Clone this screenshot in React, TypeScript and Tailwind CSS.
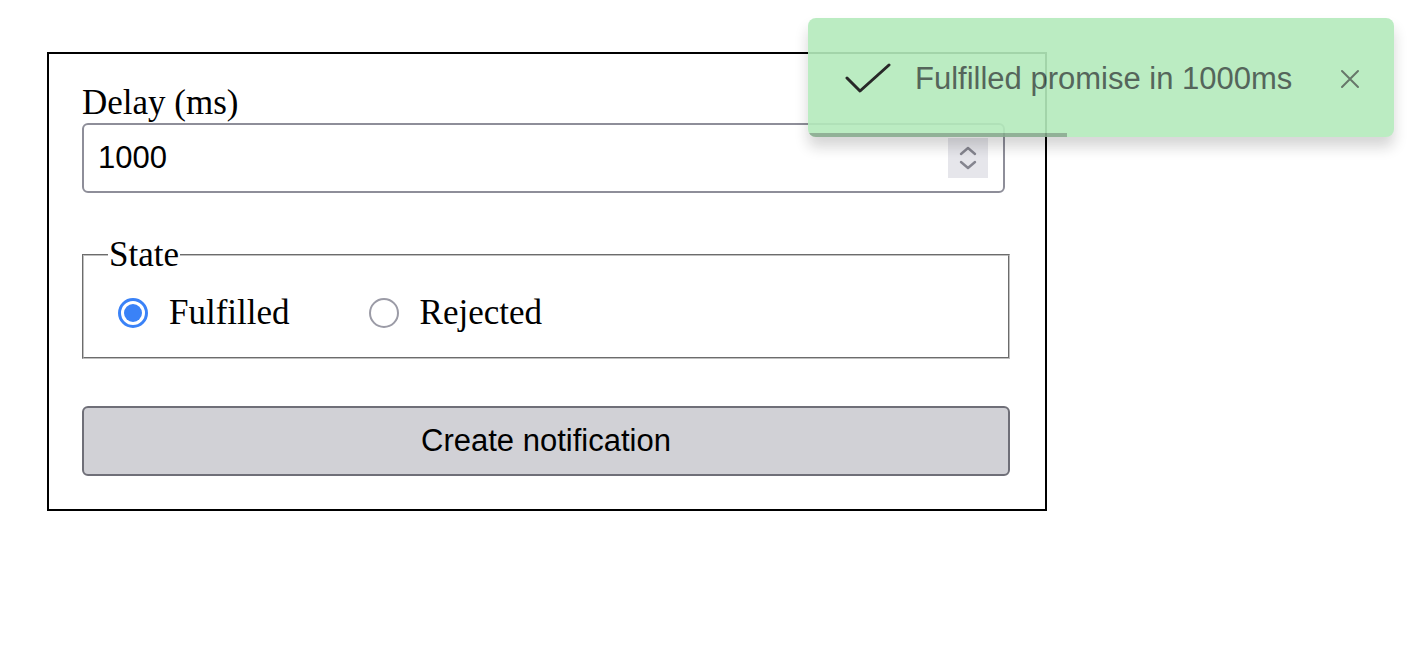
import React from "react";

export default function App() {
  const serif = { fontFamily: '"Liberation Serif", "Times New Roman", serif' };
  return (
    <div className="relative w-[1408px] h-[656px] bg-white overflow-hidden" style={{ fontFamily: '"Liberation Sans", Arial, sans-serif' }}>
      <div className="ml-[47px] mt-[52px] w-[1000px] border-2 border-black px-[33px] pt-[29px] pb-[33px]">
        <div className="h-[40px] text-[35px] leading-[40px] text-black" style={serif}>Delay (ms)</div>
        <div className="w-[923px] h-[70px] border-2 border-[#8e8e99] rounded-[6px] flex items-center pl-[14px] pr-[15px]">
          <span className="flex-1 text-[31px] text-black">1000</span>
          <div className="w-[40px] h-[40px] bg-[#e6e6eb] flex flex-col items-center justify-center gap-[4px]">
            <svg width="18" height="10" viewBox="0 0 18 10" fill="none">
              <path d="M2 8 L9 2 L16 8" stroke="#85858f" strokeWidth="2.4" strokeLinecap="round" strokeLinejoin="round" />
            </svg>
            <svg width="18" height="10" viewBox="0 0 18 10" fill="none">
              <path d="M2 2 L9 8 L16 2" stroke="#85858f" strokeWidth="2.4" strokeLinecap="round" strokeLinejoin="round" />
            </svg>
          </div>
        </div>
        <fieldset className="mt-[42px] w-[928px] border-2 [border-style:groove] border-[#c0c0c0] pl-[24px] pr-[20px] pb-[23px] pt-[17px]">
          <legend className="text-[35px] leading-[40px] px-[1px] text-black" style={serif}>State</legend>
          <div className="flex items-center h-[42px]" style={serif}>
            <span className="w-[30px] h-[30px] rounded-full border-[3px] border-[#3a82f7] flex items-center justify-center ml-[10px]">
              <span className="w-[18px] h-[18px] rounded-full bg-[#3a82f7]" />
            </span>
            <span className="ml-[21px] text-[35px] text-black">Fulfilled</span>
            <span className="ml-[79px] w-[30px] h-[30px] rounded-full border-2 border-[#9b9ba6]" />
            <span className="ml-[21px] text-[35px] text-black">Rejected</span>
          </div>
        </fieldset>
        <button className="mt-[47px] w-[928px] h-[70px] bg-[#d1d1d6] border-2 border-[#6f6f78] rounded-[6px] text-[31px] text-black flex items-center justify-center">
          Create notification
        </button>
      </div>

      <div className="absolute left-[808px] top-[18px] w-[586px] h-[119px] rounded-[8px] bg-[#b4ebbc] opacity-90 shadow-[0_10px_14px_rgba(0,0,0,0.18)] overflow-hidden flex items-center">
        <svg className="ml-[37px] mt-[2px]" width="46" height="32" viewBox="0 0 46 32" fill="none">
          <path d="M2 15 L15 28 L44 2" stroke="#111" strokeWidth="3" strokeLinecap="round" strokeLinejoin="round" />
        </svg>
        <span className="ml-[24px] mt-[3px] text-[31px] text-[#43554a]">Fulfilled promise in 1000ms</span>
        <svg className="ml-[48px] mt-[2px]" width="20" height="20" viewBox="0 0 20 20" fill="none">
          <path d="M2 2 L18 18 M18 2 L2 18" stroke="#57695a" strokeWidth="2" strokeLinecap="round" />
        </svg>
        <div className="absolute left-0 bottom-0 w-[259px] h-[4px] bg-[#86a98c]" />
      </div>
    </div>
  );
}
